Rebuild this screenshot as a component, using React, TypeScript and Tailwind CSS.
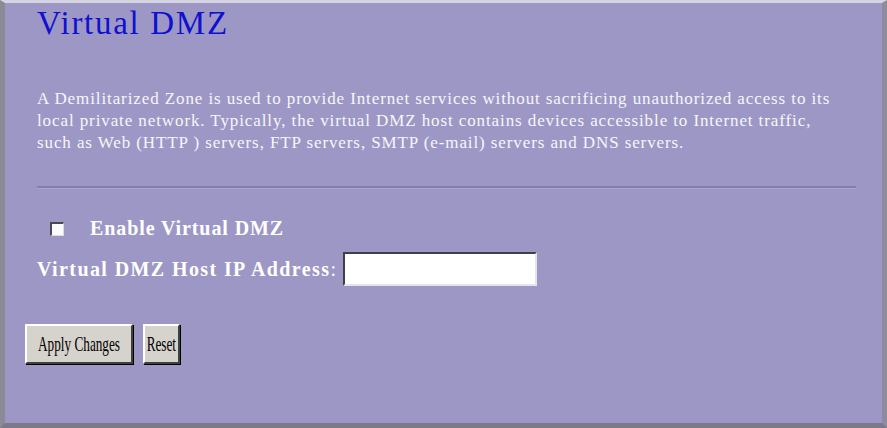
import React from 'react';

const serif = { fontFamily: '"Liberation Serif", "Times New Roman", serif' };

const App = () => {
  return (
    <div
      className="w-[887px] h-[428px] bg-[#9d97c6] border-t-[3px] border-t-[#d6d4e2] border-l-[5px] border-l-[#8c8a98] border-r-[5px] border-r-[#8e8b9c] border-b-[5px] border-b-[#7c7a88] overflow-hidden"
      style={serif}
    >
      <div className="pl-[32px] pr-[20px]">
        <h1 className="text-[33px] leading-none text-[#1010d0] tracking-[1.7px] pt-[4px]">Virtual DMZ</h1>

        <p className="mt-[48px] text-[17px] leading-[22px] text-[#f6f6fa] tracking-[0.9px] whitespace-nowrap">
          A Demilitarized Zone is used to provide Internet services without sacrificing unauthorized access to its
          <br />
          local private network. Typically, the virtual DMZ host contains devices accessible to Internet traffic,
          <br />
          such as Web (HTTP ) servers, FTP servers, SMTP (e-mail) servers and DNS servers.
        </p>

        <div className="mt-[32px] mr-[6px] border-t-2 border-t-[#837ead] border-b border-b-[#aaa5d0]" />

        <div className="mt-[28px] h-[23px] flex items-center">
          <span className="ml-[13px] w-[14px] h-[14px] bg-[#fbfbfb] border-t-2 border-l-2 border-t-[#4a4a4a] border-l-[#4a4a4a] border-r border-b border-r-[#dcdcdc] border-b-[#dcdcdc]" />
          <span className="ml-[26px] text-[20px] leading-[23px] font-bold text-white tracking-[0.9px]">Enable Virtual DMZ</span>
        </div>

        <div className="mt-[12px] flex items-center">
          <span className="text-[20px] leading-[23px] font-bold text-white tracking-[1.4px]">Virtual DMZ Host IP Address</span>
          <span className="text-[20px] leading-[23px] text-white">:</span>
          <input
            type="text"
            className="ml-[7px] w-[194px] h-[34px] bg-white border-t-2 border-l-2 border-t-[#404040] border-l-[#404040] border-r-2 border-b-2 border-r-[#e4e4ec] border-b-[#e4e4ec] outline-none"
          />
        </div>

        <div className="mt-[38px] -ml-[12px] flex gap-[10px]">
          <button className="w-[108px] h-[40px] bg-[#d6d3cc] text-black border-2 border-t-white border-l-white border-r-[#404040] border-b-[#404040] shadow-[1px_1px_0_#000] flex items-center justify-center">
            <span className="inline-block text-[21px] leading-none scale-x-[0.63] whitespace-nowrap">Apply Changes</span>
          </button>
          <button className="w-[37px] h-[40px] bg-[#d6d3cc] text-black border-2 border-t-white border-l-white border-r-[#404040] border-b-[#404040] shadow-[1px_1px_0_#000] flex items-center justify-center">
            <span className="inline-block text-[21px] leading-none scale-x-[0.63] whitespace-nowrap">Reset</span>
          </button>
        </div>
      </div>
    </div>
  );
};

export default App;
